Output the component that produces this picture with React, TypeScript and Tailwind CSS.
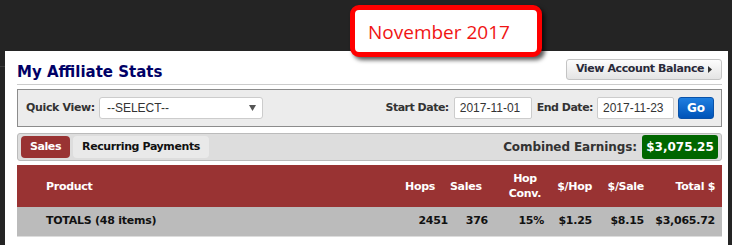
import { ReactNode } from "react";

const dv = "font-['DejaVu_Sans',sans-serif] font-bold";
const ar = "font-['Liberation_Sans',Arial,sans-serif]";

function Arrow({ className }: { className?: string }) {
  return (
    <svg width="4" height="7" viewBox="0 0 4 7" className={className}>
      <polygon points="0,0 4,3.5 0,7" fill="#333" />
    </svg>
  );
}

function DateInput({ value, className }: { value: string; className?: string }) {
  return (
    <div
      className={`h-[22px] bg-white border border-[#cccccc] rounded-[2px] flex items-center pl-[5px] text-[12px] text-[#333] ${ar} ${className ?? ""}`}
    >
      {value}
    </div>
  );
}

function Cell({ children, className }: { children?: ReactNode; className?: string }) {
  return <div className={className}>{children}</div>;
}

export default function App() {
  return (
    <div className="relative w-[732px] h-[245px] bg-[#242424] overflow-hidden">
      <div className="h-[51px]" />
      <div className="flex h-[194px]">
        <div className="w-[5px] pt-[15px]">
          <div className="h-px bg-[#3a3a3a]" />
        </div>

        <div className="w-[723px] bg-white pl-[12px] pr-[6px]">
          {/* title row */}
          <div className="flex justify-between items-start h-[33px]">
            <h1 className={`mt-[11px] leading-[20px] text-[15px] text-[#000066] ${dv}`}>
              My Affiliate Stats
            </h1>
            <button
              type="button"
              className={`mt-[8px] h-[21px] w-[156px] flex items-center justify-center gap-[4px] rounded-[3px] border border-[#c4c4c4] bg-gradient-to-b from-[#fdfdfd] to-[#e4e4e4] text-[11px] tracking-[-0.4px] text-[#2a2a3a] ${dv}`}
            >
              View Account Balance
              <Arrow />
            </button>
          </div>
          <div className="h-px bg-[#cccccc]" />

          {/* filters */}
          <div className="mt-[4px] h-[38px] border border-[#8c8c8c] bg-[#ececec] flex items-center justify-between pl-[8px] pr-[7px]">
            <div className="flex items-center">
              <span className={`text-[11px] tracking-[-0.35px] text-[#333] ${dv}`}>Quick View:</span>
              <div
                className={`ml-[4px] w-[164px] h-[22px] bg-white border border-[#cccccc] rounded-[3px] flex items-center justify-between pl-[7px] pr-[6px] text-[12px] text-[#333] ${ar}`}
              >
                --SELECT--
                <svg width="7" height="6" viewBox="0 0 7 6">
                  <polygon points="0,0 7,0 3.5,6" fill="#555" />
                </svg>
              </div>
            </div>
            <div className="flex items-center">
              <span className={`text-[11px] tracking-[-0.5px] text-[#333] ${dv}`}>Start Date:</span>
              <DateInput value="2017-11-01" className="ml-[5px] w-[78px]" />
              <span className={`ml-[5px] text-[11px] tracking-[-0.5px] text-[#333] ${dv}`}>End Date:</span>
              <DateInput value="2017-11-23" className="ml-[4px] w-[77px]" />
              <button
                type="button"
                className={`ml-[4px] w-[36px] h-[22px] rounded-[3px] border border-[#0a52a8] bg-gradient-to-b from-[#1f7fe0] to-[#0053b8] text-white text-[12px] ${dv}`}
              >
                Go
              </button>
            </div>
          </div>

          {/* tabs */}
          <div className="mt-[6px] h-[28px] border border-[#bbbbbb] rounded-[3px] bg-[#dddddd] flex items-center justify-between pl-[3px] pr-[3px]">
            <div className="flex items-center gap-[3px]">
              <div
                className={`w-[49px] h-[22px] rounded-[4px] bg-[#993333] text-white flex items-center justify-center text-[11px] tracking-[-0.4px] ${dv}`}
              >
                Sales
              </div>
              <div
                className={`w-[136px] h-[22px] rounded-[4px] bg-[#e9e9e9] text-[#111] flex items-center justify-center text-[11px] tracking-[-0.4px] ${dv}`}
              >
                Recurring Payments
              </div>
            </div>
            <div className="flex items-center">
              <span className={`text-[12px] tracking-[-0.1px] text-[#333] ${dv}`}>Combined Earnings:</span>
              <div
                className={`ml-[5px] w-[76px] h-[24px] rounded-[3px] bg-[#006600] text-white flex items-center justify-center text-[12px] ${dv}`}
              >
                $3,075.25
              </div>
            </div>
          </div>

          {/* table */}
          <div
            className={`mt-[4px] h-[42px] bg-[#993333] text-white grid grid-cols-[379px_54px_42px_58px_47px_51px_74px] items-center text-[11px] leading-[15px] tracking-[-0.3px] ${dv}`}
          >
            <Cell className="pl-[29px]">Product</Cell>
            <Cell className="text-right pr-[15px]">Hops</Cell>
            <Cell className="text-right pr-[13px]">Sales</Cell>
            <Cell className="text-center pl-[8px]">
              Hop
              <br />
              Conv.
            </Cell>
            <Cell className="text-right pr-[5px]">$/Hop</Cell>
            <Cell className="text-right pr-[4px]">$/Sale</Cell>
            <Cell className="text-right pr-[7px]">Total $</Cell>
          </div>
          <div
            className={`h-[30px] bg-[#bbbbbb] border-b border-[#dddddd] text-[#111] grid grid-cols-[379px_54px_42px_58px_47px_51px_74px] items-center text-[11px] tracking-[-0.25px] ${dv}`}
          >
            <Cell className="pl-[29px]">TOTALS (48 items)</Cell>
            <Cell className="text-right pr-[2px]">2451</Cell>
            <Cell className="text-right pr-[4px]">376</Cell>
            <Cell className="text-right pr-[6px]">15%</Cell>
            <Cell className="text-right pr-[5px]">$1.25</Cell>
            <Cell className="text-right pr-[4px]">$8.15</Cell>
            <Cell className="text-right pr-[7px]">$3,065.72</Cell>
          </div>
        </div>
      </div>

      {/* month callout */}
      <div className="absolute left-[350px] top-[5px] w-[192px] h-[52px] border-[5px] border-[#ff0000] rounded-[9px] bg-white shadow-[3px_3px_4px_rgba(0,0,0,0.65)] flex items-center pl-[13px] pt-[2px]">
        <span className="font-['Open_Sans',sans-serif] text-[19px] text-[#f01414] leading-none">
          November 2017
        </span>
      </div>
    </div>
  );
}
